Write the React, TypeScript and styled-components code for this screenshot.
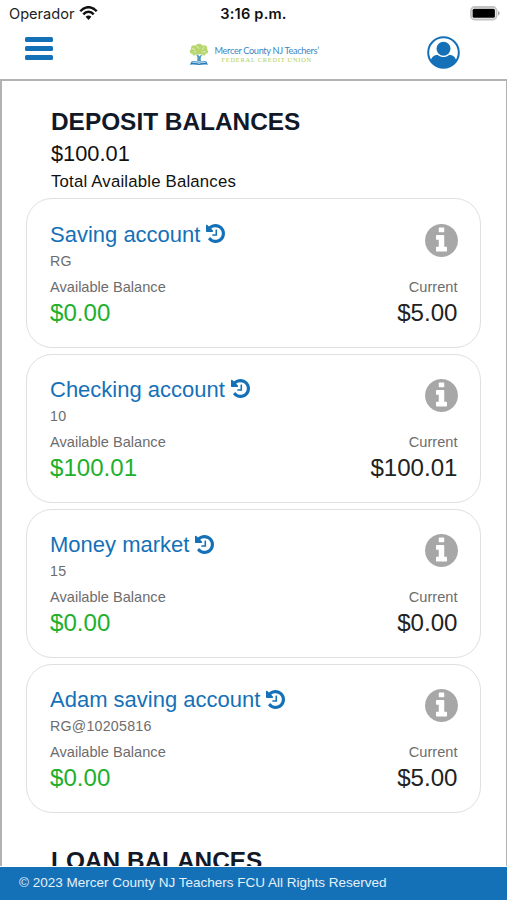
import React from "react";
import styled, { createGlobalStyle } from "styled-components";

const BLUE = "#1571b7";

const GlobalStyle = createGlobalStyle`
  *, *::before, *::after { box-sizing: border-box; }
  body {
    margin: 0;
    background: #fff;
    font-family: "Liberation Sans", Arial, sans-serif;
  }
  h2, p { margin: 0; font-weight: 400; }
  svg { display: block; flex: none; }
  button { border: 0; padding: 0; background: none; }
`;

const Screen = styled.div`
  display: flex;
  flex-direction: column;
  width: 507px;
  height: 900px;
  overflow: hidden;
  background: #fff;
`;

const StatusBar = styled.div`
  display: grid;
  grid-template-columns: 1fr auto 1fr;
  align-items: center;
  height: 28px;
  padding: 0 7px 0 9px;
  font-family: Inter, sans-serif;
  line-height: 28px;
  color: #222;
`;

const Carrier = styled.div`
  display: flex;
  align-items: center;
  gap: 5px;
  font-size: 14.6px;
`;

const WifiSlot = styled.span`
  padding-bottom: 2px;
`;

const Clock = styled.div`
  margin-right: 2px;
  font-size: 14.6px;
  font-weight: 600;
  letter-spacing: 0.2px;
  color: #111;
`;

const Battery = styled.div`
  display: flex;
  justify-content: flex-end;
  padding-bottom: 2px;
`;

const Header = styled.header`
  display: flex;
  align-items: center;
  justify-content: space-between;
  height: 51px;
  padding: 0 47px 2px 25px;
`;

const MenuButton = styled.button`
  display: flex;
  flex-direction: column;
  gap: 4px;
  width: 28px;
  margin-top: -8px;
`;

const MenuLine = styled.span`
  height: 5px;
  border-radius: 1.5px;
  background: ${BLUE};
`;

const Logo = styled.div`
  display: flex;
  align-items: center;
  gap: 6px;
  width: 131px;
  margin: 3px 0 0 28px;
  white-space: nowrap;
`;

const LogoText = styled.div`
  display: flex;
  flex-direction: column;
`;

const LogoName = styled.span`
  font-family: Lato, sans-serif;
  font-size: 9.2px;
  line-height: 10px;
  letter-spacing: -0.33px;
  color: #3b86c4;
`;

const LogoSub = styled.span`
  padding-left: 7px;
  font-family: "Liberation Serif", serif;
  font-size: 6.4px;
  line-height: 7px;
  letter-spacing: 0.76px;
  color: #a9cf5c;
`;

const Content = styled.main`
  flex: 1;
  min-height: 0;
  overflow: hidden;
  padding: 27px 25px 0 24px;
  border: solid #b2b2b2;
  border-width: 2px 1px 0 2px;
`;

const SectionHead = styled.section`
  padding-left: 25px;
  color: #111;
`;

const SectionTitle = styled.h2`
  font-size: 24.4px;
  font-weight: 700;
  line-height: 28px;
  color: #111827;
`;

const Total = styled.p`
  margin-top: 5px;
  font-size: 21.8px;
  line-height: 26px;
`;

const TotalLabel = styled.p`
  margin-top: 5px;
  font-size: 16.8px;
  line-height: 20px;
  letter-spacing: 0.18px;
`;

const Cards = styled.div`
  display: flex;
  flex-direction: column;
  gap: 6px;
  margin: 6.4px 0 33.8px;
`;

const Card = styled.article`
  display: flex;
  flex-direction: column;
  height: 149.2px;
  padding: 22.4px 22.5px 0 23px;
  border: 1.5px solid #e0e0e0;
  border-radius: 26px;
`;

const CardTop = styled.div`
  display: flex;
  justify-content: space-between;
`;

const AccountName = styled.div`
  display: flex;
  align-items: center;
  gap: 6px;
  font-size: 22px;
  line-height: 26px;
  color: ${BLUE};
`;

const AccountId = styled.p`
  margin-top: 4px;
  font-size: 14.2px;
  line-height: 18px;
  letter-spacing: 0.25px;
  color: #6d6d6d;
`;

const InfoButton = styled.button`
  height: 33px;
  margin-top: 2px;
  color: #a7a7a7;
`;

const Balances = styled.div`
  display: flex;
  justify-content: space-between;
  margin-top: 8px;
`;

const Balance = styled.div<{ $end?: boolean }>`
  text-align: ${(p) => (p.$end ? "right" : "left")};
`;

const BalanceLabel = styled.p`
  font-size: 14.6px;
  line-height: 18px;
  color: #6d6d6d;
`;

const Amount = styled.p<{ $available?: boolean }>`
  margin-top: 3px;
  font-size: 24.1px;
  line-height: 28px;
  color: ${(p) => (p.$available ? "#20b02c" : "#222")};
`;

const Footer = styled.footer`
  height: 33px;
  margin-top: 1px;
  padding-left: 19px;
  background: ${BLUE};
  color: #e4f0fa;
  font-size: 13.5px;
  line-height: 31px;
`;

const accounts = [
  { name: "Saving account", id: "RG", available: "$0.00", current: "$5.00" },
  { name: "Checking account", id: "10", available: "$100.01", current: "$100.01" },
  { name: "Money market", id: "15", available: "$0.00", current: "$0.00" },
  { name: "Adam saving account", id: "RG@10205816", available: "$0.00", current: "$5.00" },
];

const HistoryIcon = () => (
  <svg width="19" height="21" viewBox="0 128 1536 1698" fill="currentColor">
    <path d="M1536 896q0 156-61 298t-164 245-245 164-298 61q-172 0-327-72.500T177 1387q-7-10-6.500-22.500t8.500-20.500l137-138q10-9 25-9 16 2 23 12 73 95 179 147t225 52q104 0 198.500-40.500T1130 1258t109.500-163.500T1280 896t-40.500-198.500T1130 534 966.500 424.500 768 384q-98 0-188 35.500T420 521l137 138q31 30 14 69-17 40-59 40H64q-26 0-45-19T0 704V256q0-42 40-59 39-17 69 14l130 129q107-101 244.500-156.500T768 128q156 0 298 61t245 164 164 245 61 298zM896 608v448q0 14-9 23t-23 9H544q-14 0-23-9t-9-23v-64q0-14 9-23t23-9h224V608q0-14 9-23t23-9h64q14 0 23 9t9 23z" />
  </svg>
);

const InfoIcon = () => (
  <svg width="33" height="33" viewBox="0 128 1536 1536" fill="currentColor">
    <path d="M1024 1376v-160q0-14-9-23t-23-9h-96V672q0-14-9-23t-23-9H544q-14 0-23 9t-9 23v160q0 14 9 23t23 9h96v320h-96q-14 0-23 9t-9 23v160q0 14 9 23t23 9h448q14 0 23-9t9-23zM896 480V320q0-14-9-23t-23-9H672q-14 0-23 9t-9 23v160q0 14 9 23t23 9h192q14 0 23-9t9-23zm640 416q0 209-103 385.500T1153.500 1561 768 1664t-385.500-103T103 1281.500 0 896t103-385.500T382.500 231 768 128t385.500 103T1433 510.500 1536 896z" />
  </svg>
);

const WifiIcon = () => (
  <svg width="19" height="15" viewBox="0 0 19 15" fill="none" stroke="#111" strokeWidth="2.5">
    <path d="M1.300 5.200C6-.2 13-.2 17.700 5.200" />
    <path d="M4.300 8.300c3-3.300 7.400-3.300 10.400 0" />
    <path d="M6.600 10.800c1.700-1.800 4.100-1.800 5.800 0L9.500 14z" fill="#111" stroke="none" />
  </svg>
);

const BatteryIcon = () => (
  <svg width="30" height="15" viewBox="0 0 30 15">
    <rect x="1" y="1" width="25.500" height="12.500" rx="3.600" fill="#fff" stroke="#c2c2c2" strokeWidth="1.800" />
    <rect x="2.600" y="2.800" width="22.300" height="9" rx="1.500" fill="#000" />
    <path d="M28 5v4.600c2.200-.7 2.200-3.900 0-4.600z" fill="#aaa" />
  </svg>
);

const UserIcon = () => (
  <svg width="33" height="33" viewBox="0 0 33 33">
    <circle cx="16.500" cy="16.500" r="15.300" fill="#fff" stroke={BLUE} strokeWidth="2" />
    <circle cx="16.500" cy="12.700" r="7" fill={BLUE} />
    <path
      d="M3.800 24.500c.7-3.600 3.200-5.600 7.100-5.600 3.500 2.800 7.700 2.800 11.200 0 3.900 0 6.400 2 7.100 5.600-5.500 9.800-19.900 9.800-25.400 0z"
      fill={BLUE}
    />
  </svg>
);

const TreeIcon = () => (
  <svg width="20" height="23" viewBox="0 0 20 23">
    <g fill="#b8d66f">
      <circle cx="10" cy="4.300" r="3.600" />
      <circle cx="5" cy="5.300" r="3" />
      <circle cx="15" cy="5.500" r="3.200" />
      <circle cx="3.100" cy="8.400" r="2.300" />
      <circle cx="16.800" cy="8.500" r="2.300" />
      <ellipse cx="10" cy="8.400" rx="5.400" ry="3.200" />
      <circle cx="5" cy="11" r="1.600" />
      <circle cx="15" cy="11" r="1.600" />
    </g>
    <path d="M3 5.500l3 1.200M8 3l2 2.600M15.500 4l-2.700 2.500M4.600 9l2.300-.4M16.500 8.600l-3.200.3" stroke="#eef6d3" strokeWidth=".8" />
    <path d="M6.500 11.500c2 1.200 2.500 3.300 1.600 7h4c-1-3.500-.2-5.600 1.800-7-1.800.3-2.700.8-3.300 2-.6-1.200-2.200-1.800-4.100-2z" fill="#4a98bd" />
    <path d="M2.600 18.500c2.800-.6 5.400-.3 7.300 1 2.100-1.300 4.700-1.600 7.500-1l1.500 3.200c-3.500-.5-6.400-.4-9 .4-2.600-.8-5.500-.9-9-.4z" fill="#267cb8" />
    <path d="M3.500 19.500c2.700-.3 4.600 0 6.400.9 1.900-.9 3.900-1.200 6.600-.9" fill="none" stroke="#d5eaf6" strokeWidth=".9" />
  </svg>
);

function AccountCard({ account }: { account: (typeof accounts)[number] }) {
  return (
    <Card>
      <CardTop>
        <div>
          <AccountName>
            <span>{account.name}</span>
            <HistoryIcon />
          </AccountName>
          <AccountId>{account.id}</AccountId>
        </div>
        <InfoButton aria-label="Account information">
          <InfoIcon />
        </InfoButton>
      </CardTop>
      <Balances>
        <Balance>
          <BalanceLabel>Available Balance</BalanceLabel>
          <Amount $available>{account.available}</Amount>
        </Balance>
        <Balance $end>
          <BalanceLabel>Current</BalanceLabel>
          <Amount>{account.current}</Amount>
        </Balance>
      </Balances>
    </Card>
  );
}

export default function App() {
  return (
    <Screen>
      <GlobalStyle />
      <StatusBar>
        <Carrier>
          <span>Operador</span>
          <WifiSlot>
            <WifiIcon />
          </WifiSlot>
        </Carrier>
        <Clock>3:16 p.m.</Clock>
        <Battery>
          <BatteryIcon />
        </Battery>
      </StatusBar>
      <Header>
        <MenuButton aria-label="Menu">
          <MenuLine />
          <MenuLine />
          <MenuLine />
        </MenuButton>
        <Logo>
          <TreeIcon />
          <LogoText>
            <LogoName>Mercer County NJ Teachers’</LogoName>
            <LogoSub>FEDERAL CREDIT UNION</LogoSub>
          </LogoText>
        </Logo>
        <UserIcon />
      </Header>
      <Content>
        <SectionHead>
          <SectionTitle>DEPOSIT BALANCES</SectionTitle>
          <Total>$100.01</Total>
          <TotalLabel>Total Available Balances</TotalLabel>
        </SectionHead>
        <Cards>
          {accounts.map((account) => (
            <AccountCard key={account.name} account={account} />
          ))}
        </Cards>
        <SectionHead>
          <SectionTitle>LOAN BALANCES</SectionTitle>
        </SectionHead>
      </Content>
      <Footer>© 2023 Mercer County NJ Teachers FCU All Rights Reserved</Footer>
    </Screen>
  );
}
